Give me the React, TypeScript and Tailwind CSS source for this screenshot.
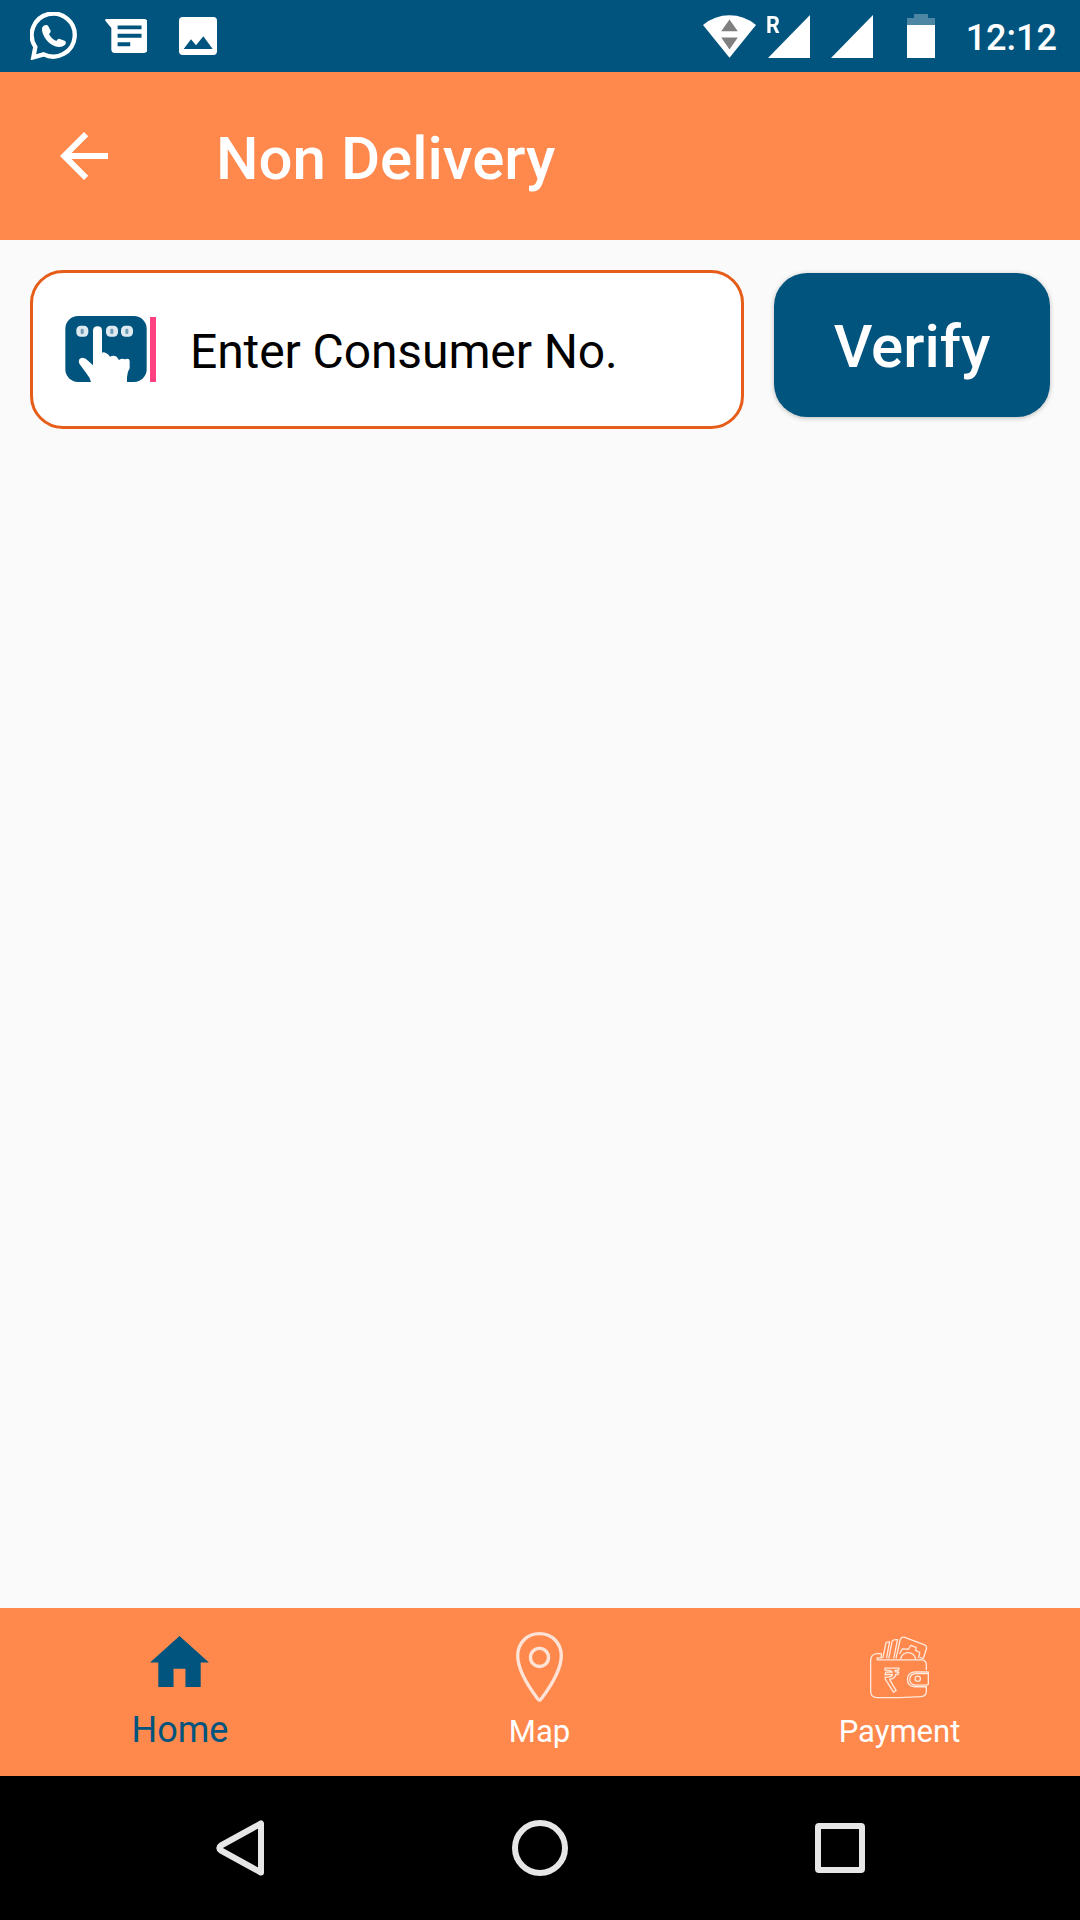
// ── Non Delivery screen ───────────────────────────────────────────────────────
// Consumer number lookup with app bar, bottom tabs and the system bars.

import type { ReactNode } from "react";

// ── Status bar icons ──────────────────────────────────────────────────────────

function WhatsAppIcon() {
  return (
    <svg viewBox="90 36 144 144" className="w-[48px] h-[48px]" fill="none">
      <path
        d="M106 141 L100 172 L131 163 A64.500 64.500 0 1 0 106 141Z"
        stroke="#fff"
        strokeWidth="13"
      />
      <path
        d="M126 84C130 74 141 72 145 79L152 92C153 96 149 99 147 103C152 112 159 119 169 123C172 119 175 115 179 117L194 122C201 126 197 134 190 138C180 143 168 141 157 135C142 127 124 104 126 84Z"
        fill="#fff"
      />
    </svg>
  );
}

function MessagesIcon() {
  return (
    <svg viewBox="314 57 128 102" className="ml-[26.500px] w-[42.500px] h-[34px]">
      <path
        d="M318 57H431Q442 57 442 68V148Q442 159 431 159H344Q333 159 333 148V84L315 62Q313 57 318 57Z"
        fill="#fff"
      />
      <path d="M352 76h72v12h-72zM352 101h72v12h-72zM352 127h38v12h-38z" fill="#00547d" />
    </svg>
  );
}

function ImageIcon() {
  return (
    <svg viewBox="537 51 114 114" className="ml-[32px] w-[38px] h-[38px]">
      <rect x="537" y="51" width="114" height="114" rx="11" fill="#fff" />
      <path d="M551 147L573 118L588 136L610 109L638 147Z" fill="#00547d" />
    </svg>
  );
}

function WifiIcon() {
  return (
    <svg viewBox="68 42 160 128" className="w-[53px] h-[43px]">
      <path d="M68 71Q104 42 148 42Q192 42 228 71L148 170Z" fill="#fff" />
      <path d="M123 90L148 55L173 90ZM123 109H173L148 145Z" fill="#808080" />
    </svg>
  );
}

function SignalIcon() {
  return (
    <svg viewBox="0 0 42 43" className="w-[42px] h-[43px]">
      <path d="M42 0V43H0Z" fill="#fff" />
    </svg>
  );
}

function BatteryIcon() {
  return (
    <svg viewBox="0 0 28 44" className="ml-[34px] w-[28px] h-[44px]">
      <path d="M7 0H21V4H28V11H0V4H7Z" fill="#4d87a4" />
      <path d="M0 11H28V44H0Z" fill="#fff" />
    </svg>
  );
}

// ── Content icons ─────────────────────────────────────────────────────────────

function KeypadIcon() {
  return (
    <svg viewBox="133 168 246 198" className="mb-[2px] w-[82px] h-[66px] overflow-visible blur-[0.6px]">
      <rect x="134" y="168" width="244" height="198" rx="38" fill="#00547d" />
      {[185, 274, 319].map((x) => (
        <g key={x}>
          <rect x={x - 18} y="197" width="36" height="33" rx="13" fill="#dfeaf0" />
          <rect x={x - 5} y="206" width="9" height="16" rx="3" fill="#6f9db5" />
        </g>
      ))}
      <path
        d="M217 212Q217 199 231 199Q244 199 244 212V278Q250 274 262 283L268 290Q277 284 288 290L295 300Q304 294 313 298Q326 292 327 303V325Q320 335 319 352V369H212Q209 354 197 340L176 311Q171 298 182 294Q191 291 203 303L217 316Z"
        fill="#fff"
      />
    </svg>
  );
}

function HomeIcon() {
  return (
    <svg viewBox="151 108 178 154" className="mr-[1px] w-[59px] h-[51px]">
      <path d="M240 108L329 188H304V262H258V207H222V262H176V188H151Z" fill="#00547d" />
    </svg>
  );
}

function PinIcon() {
  return (
    <svg viewBox="230 97 140 212" className="mr-[1px] w-[47px] h-[71px] blur-[0.4px]" fill="none" stroke="#ffe3d6" strokeWidth="10">
      <path
        d="M300 102C262 102 235 130 235 168C235 213 270 264 295 297Q300 305 305 297C330 264 365 213 365 168C365 130 338 102 300 102Z"
      />
      <circle cx="300" cy="173" r="27" />
    </svg>
  );
}

function WalletIcon() {
  return (
    <svg
      viewBox="209 109 182 190"
      className="mr-[1px] w-[61px] h-[63px]"
      fill="none"
      stroke="#ffe9dc"
      strokeWidth="4"
      strokeLinejoin="round"
      strokeLinecap="round"
    >
      {/* body */}
      <path d="M381 211V197Q381 181 366 181H233V175H245V162H232Q213 163 213 184V276Q213 295 232 295H300L365 292Q381 291 381 276V263" />
      {/* clasp */}
      <path d="M387 217H346Q324 219 324 240Q324 260 346 262H381M387 217V253Q387 257 380 257H349Q331 255 331 240Q331 224 349 222H384" />
      <circle cx="355" cy="238" r="8" />
      {/* notes */}
      <path d="M250 174L259 130Q260 126 270 127L261 175M268 175L278 124Q281 119 294 120L283 175" />
      <path d="M290 175L302 120Q306 110 316 113L374 135Q384 139 381 148L373 174Q371 179 363 174" />
      <path d="M303 179Q308 159 326 159Q344 159 349 179M301 162L308 148L327 149L334 137L350 143L349 153L361 158L358 174" />
      {/* rupee */}
      <path d="M256 206H299L296 213H286L289 218H298L295 225H289Q286 239 270 240L290 274L282 278L257 239V233H267Q277 232 279 225H256L259 218H278Q275 212 256 212Z" />
    </svg>
  );
}

// ── Bottom tabs ───────────────────────────────────────────────────────────────

function Tab({ label, active, children }: { label: string; active?: boolean; children: ReactNode }) {
  return (
    <button className="flex flex-1 flex-col items-center">
      <span className={active ? "flex h-[101px] items-start pt-[28px]" : "flex h-[105px] items-start pt-[24px]"}>
        {children}
      </span>
      <span
        className={
          active
            ? "text-[36px] leading-[42px] text-[#00547d]"
            : "pr-[1px] text-[31px] leading-[38px] text-white"
        }
      >
        {label}
      </span>
    </button>
  );
}

// ── Screen ────────────────────────────────────────────────────────────────────

export default function App() {
  return (
    <div className="flex h-[1920px] w-[1080px] flex-col overflow-hidden bg-[#fafafa] font-['Roboto',sans-serif]">
      {/* Status bar */}
      <div className="flex h-[72px] flex-shrink-0 items-center bg-[#00547d] pl-[30px] pr-[23px] text-white">
        <WhatsAppIcon />
        <MessagesIcon />
        <ImageIcon />
        <div className="ml-auto flex items-center">
          <WifiIcon />
          <div className="relative ml-[12px]">
            <SignalIcon />
            <span className="absolute -left-[2px] -top-[2px] text-[24px] font-bold leading-[24px] scale-x-90 origin-left">
              R
            </span>
          </div>
          <div className="ml-[21px]">
            <SignalIcon />
          </div>
          <BatteryIcon />
          <span className="ml-[31px] text-[36px] font-medium leading-[42px] pt-[3px]">12:12</span>
        </div>
      </div>

      {/* App bar */}
      <header className="flex h-[168px] flex-shrink-0 items-center bg-[#ff884d] pl-[60px] text-white">
        <svg viewBox="4 4 16 16" className="w-[48px] h-[48px]" fill="#fff">
          <path d="M20 11H7.830l5.590-5.590L12 4l-8 8 8 8 1.410-1.410L7.830 13H20v-2z" />
        </svg>
        <h1 className="ml-[108px] pt-[5px] text-[60px] font-medium leading-[70px]">Non Delivery</h1>
      </header>

      {/* Lookup form */}
      <main className="flex flex-1 items-start px-[30px] pt-[30px]">
        <label className="flex h-[159px] w-[714px] items-center rounded-[33px] border-[3px] border-[#e65c19] bg-white pl-[32px]">
          <KeypadIcon />
          <span className="ml-[3px] h-[65px] w-[6px] bg-[#ff4081]" />
          <span className="ml-[34px] pt-[4px] text-[48px] leading-[56px] tracking-[-0.1px] text-black">Enter Consumer No.</span>
        </label>
        <button className="ml-[30px] mt-[3px] h-[144px] w-[276px] rounded-[33px] bg-[#00547d] pt-[4px] text-[60px] font-medium text-white shadow-[0_1px_5px_rgba(0,0,0,0.25)]">
          Verify
        </button>
      </main>

      {/* Tabs */}
      <nav className="flex h-[168px] flex-shrink-0 bg-[#ff884d]">
        <Tab label="Home" active>
          <HomeIcon />
        </Tab>
        <Tab label="Map">
          <PinIcon />
        </Tab>
        <Tab label="Payment">
          <span className="pt-[4px]">
            <WalletIcon />
          </span>
        </Tab>
      </nav>

      {/* System navigation */}
      <div className="flex h-[144px] flex-shrink-0 items-center justify-between bg-black pl-[216px] pr-[215px]">
        <svg viewBox="0 0 48 56" className="w-[48px] h-[56px]" fill="none" stroke="#e6e6e6" strokeWidth="6" strokeLinejoin="round">
          <path d="M45 3.500V52.500L5 30.500Q1.500 28 5 25.500Z" />
        </svg>
        <div className="ml-[1px] h-[56px] w-[56px] rounded-full border-[6px] border-[#e6e6e6]" />
        <div className="h-[50px] w-[50px] rounded-[4px] border-[6px] border-[#e6e6e6]" />
      </div>
    </div>
  );
}
